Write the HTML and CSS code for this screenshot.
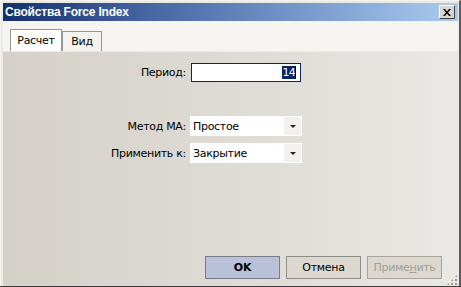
FILE: index.html
```html
<!DOCTYPE html>
<html>
<head>
    <meta charset="utf-8"/>
    <title>Свойства Force Index</title>
    <link rel="stylesheet" href="styles.css">
</head>
<body>
<div class="window">
    <div class="titlebar">
        <span class="title">Свойства Force Index</span>
        <span class="close">
            <svg width="8" height="7" viewBox="0 0 8 7"><path d="M0 0h2l2 2.5L6 0h2L5 3.5 8 7H6L4 4.5 2 7H0l3-3.5z" fill="#000"/></svg>
        </span>
    </div>
    <div class="tabs">
        <span class="tab active">Расчет</span>
        <span class="tab">Вид</span>
    </div>
    <div class="panel">
        <div class="form">
            <label class="lbl">Период:</label>
            <div class="field edit"><span class="sel">14</span><span class="caret"></span></div>
            <div class="spacer"></div>
            <label class="lbl">Метод МА:</label>
            <div class="field combo"><span class="val">Простое</span><span class="arrow"></span></div>
            <label class="lbl">Применить к:</label>
            <div class="field combo"><span class="val">Закрытие</span><span class="arrow"></span></div>
        </div>
        <div class="buttons">
            <button class="btn default">OK</button>
            <button class="btn">Отмена</button>
            <button class="btn disabled">Приме<u>н</u>ить</button>
        </div>
        <span class="grip"></span>
    </div>
</div>
</body>
</html>
```
FILE: styles.css
```css
*{
    margin: 0;
    padding: 0;
    box-sizing: border-box;
}

body{
    width: 461px;
    height: 287px;
    font-family: "DejaVu Sans", "Liberation Sans", sans-serif;
    font-size: 11px;
    letter-spacing: -0.3px;
    color: #000;
    background: #3c3c3c;
}

.window{
    width: 461px;
    height: 286px;
    display: flex;
    flex-direction: column;
    background: #ece9e4;
    border-top: 1px solid #f4f3ee;
    border-left: 1px solid #f4f3ee;
    border-right: 2px solid #5a5a5a;
    padding: 2px 1px 0 2px;
}

.titlebar{
    height: 18px;
    display: flex;
    align-items: center;
    justify-content: space-between;
    padding: 0 3px 0 2px;
    background: linear-gradient(to right, #12306e 0%, #4a6aa8 35%, #a9ccf1 100%);
}

.title{
    color: #fff;
    font-family: "Liberation Sans", sans-serif;
    font-weight: bold;
    font-size: 12px;
    letter-spacing: -0.2px;
}

.close{
    width: 16px;
    height: 14px;
    display: flex;
    align-items: center;
    justify-content: center;
    background: #d8d5ce;
    border: 1px solid;
    border-color: #fff #404040 #404040 #fff;
}

.tabs{
    height: 31px;
    display: flex;
    align-items: flex-end;
    padding-left: 7px;
    background: #f6f5f2;
    border-bottom: 1px solid #ebe9e4;
}

.tab{
    width: 40px;
    height: 20px;
    padding-top: 3px;
    text-align: center;
    border: 1px solid #91989c;
    border-bottom: none;
    background: #f4f3ef;
}

.tab.active{
    width: 52px;
    height: 22px;
    padding-top: 4px;
    background: #fdfdfc;
    margin-right: 0;
}

.panel{
    flex: 1;
    position: relative;
    display: flex;
    flex-direction: column;
    justify-content: space-between;
    background: linear-gradient(to right, #d5d1c9 0%, #e0ddd7 60%, #ebe9e5 100%);
    padding: 11px 16px 7px 0;
}

.form{
    display: grid;
    grid-template-columns: 183px 112px;
    column-gap: 4px;
    row-gap: 7px;
    align-items: center;
}

.lbl{
    text-align: right;
}

.spacer{
    grid-column: 1 / 3;
    height: 20px;
}

.field{
    height: 20px;
    display: flex;
    align-items: center;
    background: #fff;
}

.edit{
    height: 19px;
    margin-left: 1px;
    width: 110px;
    justify-content: flex-end;
    border: 1px solid #0f2460;
    padding-right: 4px;
}

.sel{
    background: #0a246a;
    color: #fff;
    line-height: 13px;
    padding: 0 0 0 1px;
    letter-spacing: -0.8px;
}

.caret{
    width: 1px;
    height: 13px;
    background: #000;
}

.combo{
    justify-content: space-between;
    padding-left: 3px;
}

.arrow{
    width: 17px;
    height: 18px;
    margin-right: 1px;
    position: relative;
    background: #f2f1ed;
}

.arrow::after{
    content: "";
    position: absolute;
    left: 6px;
    top: 8px;
    border-left: 3px solid transparent;
    border-right: 3px solid transparent;
    border-top: 3px solid #222;
}

.buttons{
    display: flex;
    justify-content: flex-end;
    gap: 6px;
}

.btn{
    width: 75px;
    height: 23px;
    font-family: "DejaVu Sans", sans-serif;
    font-size: 11px;
    letter-spacing: -0.3px;
    background: #dcd8d0;
    border: 1px solid #8c8c88;
    color: #000;
}

.btn.default{
    background: #b8c0da;
    border-color: #7a7d86;
    font-weight: bold;
}

.btn.disabled{
    color: #a19e95;
    border-color: #a6a39c;
}

.grip{
    position: absolute;
    right: 0;
    bottom: 0;
    width: 12px;
    height: 12px;
    background:
        radial-gradient(circle, #9a978f 0.8px, transparent 1px) 0 0 / 4px 4px;
    clip-path: polygon(100% 0, 100% 100%, 0 100%);
}
```
